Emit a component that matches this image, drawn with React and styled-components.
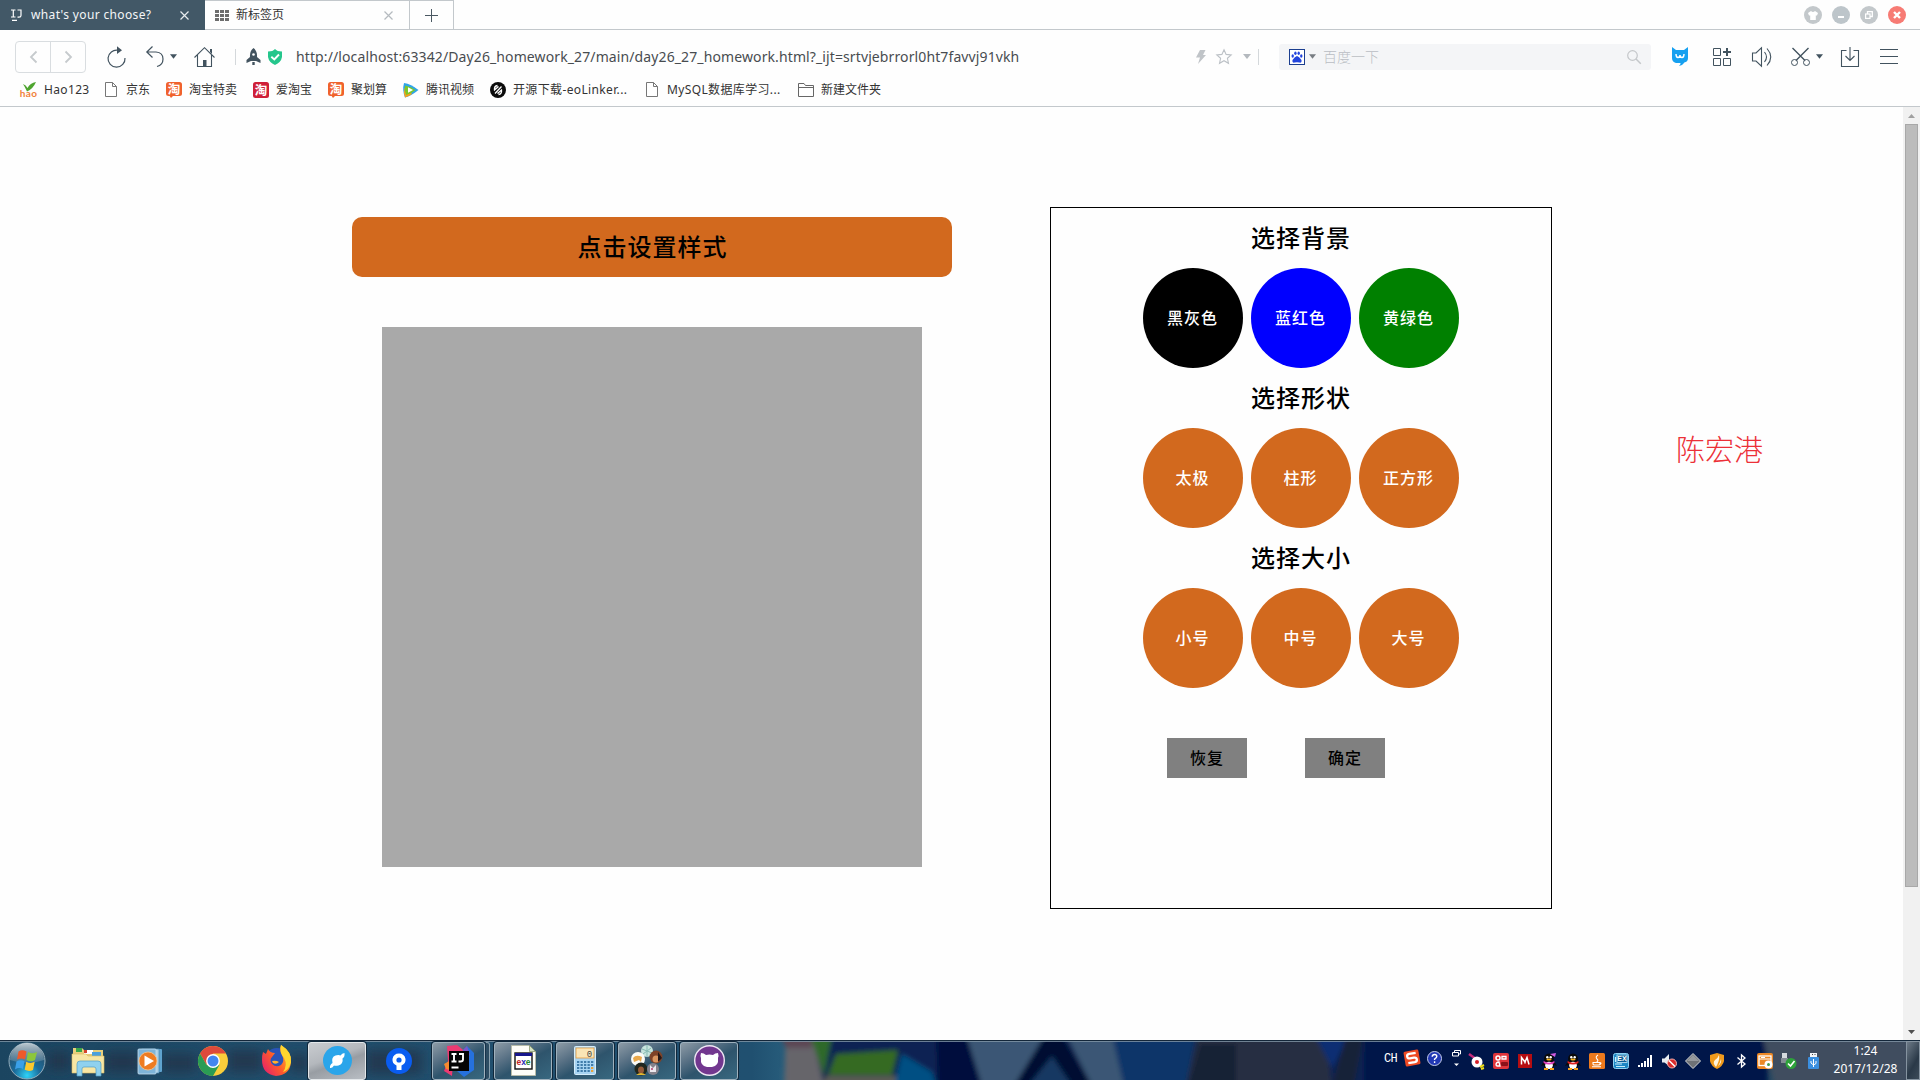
import React from "react";
import styled, { createGlobalStyle } from "styled-components";

const UI = '"Noto Sans", "Noto Sans CJK SC", sans-serif';
const CJK = '"Liberation Serif", "Noto Sans CJK SC", serif';

const GlobalStyle = createGlobalStyle`
  * { box-sizing: border-box; }
  html, body { margin: 0; background: #fff; overflow: hidden; }
  button { border: 0; padding: 0; background: none; font: inherit; color: inherit; }
  svg { display: block; flex: none; overflow: visible; }
`;

const Screen = styled.div`
  width: 1920px;
  height: 1080px;
  display: flex;
  flex-direction: column;
  font-family: ${UI};
  overflow: hidden;
  background: #fefefe;
`;

/* ---------- tab strip ---------- */
const TabStrip = styled.header`
  display: flex;
  flex: none;
  height: 30px;
  border-bottom: 1px solid #c3c8cc;
`;
const Tab = styled.div`
  display: flex;
  align-items: center;
  width: 205px;
  height: ${(p) => (p.$active ? 30 : 29)}px;
  padding: 0 16px 0 ${(p) => (p.$active ? 11 : 10)}px;
  background: ${(p) => (p.$active ? "#425867" : "#fefefe")};
  color: ${(p) => (p.$active ? "#f4f6f7" : "#333")};
  border-top: ${(p) => (p.$active ? "0" : "1px solid #c3c8cc")};
  border-right: ${(p) => (p.$active ? "0" : "1px solid #c3c8cc")};
`;
const TabTitle = styled.span`
  flex: 1;
  margin-left: ${(p) => p.$ml}px;
  font-size: 12px;
  line-height: 16px;
  letter-spacing: ${(p) => p.$ls || 0}px;
  white-space: nowrap;
`;
const NewTab = styled.button`
  display: flex;
  align-items: center;
  justify-content: center;
  width: 44px;
  border-top: 1px solid #c3c8cc;
  border-right: 1px solid #c3c8cc;
`;
const WindowButtons = styled.div`
  display: flex;
  gap: 10px;
  align-items: center;
  margin-left: auto;
  padding: 1px 14px 0 0;
`;
const RoundButton = styled.button`
  display: flex;
  align-items: center;
  justify-content: center;
  width: 18px;
  height: 18px;
  border-radius: 50%;
  background: ${(p) => p.$bg};
`;

/* ---------- address bar ---------- */
const Toolbar = styled.nav`
  display: flex;
  flex: none;
  align-items: center;
  height: 53px;
`;
const Slot = styled.div`
  display: flex;
  flex: none;
  align-items: center;
  margin-left: ${(p) => p.$ml || 0}px;
`;
const NavPair = styled.div`
  display: flex;
  margin-left: 15px;
  width: 71px;
  height: 32px;
  border: 1px solid #d9dde0;
  border-radius: 4px;
`;
const NavButton = styled.button`
  display: flex;
  flex: 1;
  align-items: center;
  justify-content: center;
  & + & { border-left: 1px solid #d9dde0; }
`;
const Divider = styled.i`
  flex: none;
  width: 1px;
  height: 16px;
  margin-left: ${(p) => p.$ml}px;
  background: #d4d8db;
`;
const Address = styled.div`
  flex: none;
  width: 900px;
  margin-left: 14px;
  font-size: 14px;
  font-weight: 400;
  line-height: 20px;
  letter-spacing: ${(p) => p.$ls}px;
  color: #484c50;
  white-space: nowrap;
`;
const SearchBox = styled.div`
  display: flex;
  flex: none;
  align-items: center;
  width: 372px;
  height: 26px;
  margin-left: 20px;
  padding: 0 10px;
  border-radius: 3px;
  background: #f4f5f7;
`;
const SearchHint = styled.span`
  flex: 1;
  margin-left: 7px;
  font-size: 14px;
  font-weight: 300;
  line-height: 18px;
  color: #b9bdc3;
`;

/* ---------- bookmarks ---------- */
const Bookmarks = styled.nav`
  display: flex;
  flex: none;
  align-items: center;
  box-sizing: content-box;
  height: 13px;
  padding: 0 0 10px 20px;
  border-bottom: 1px solid #c3c8cc;
`;
const Bookmark = styled.a`
  display: flex;
  flex: none;
  align-items: center;
  width: ${(p) => p.$w}px;
  gap: ${(p) => p.$gap || 7}px;
  font-size: 12px;
  line-height: 16px;
  letter-spacing: ${(p) => p.$ls || 0}px;
  color: #333;
  white-space: nowrap;
`;

/* ---------- page ---------- */
const Viewport = styled.div`
  display: flex;
  flex: none;
  height: 933px;
`;
const Page = styled.main`
  display: flex;
  flex: 1;
  align-items: flex-start;
  padding: 100px 0 0 352px;
  font-family: ${CJK};
`;
const Stage = styled.section`
  display: flex;
  flex-direction: column;
  align-items: center;
  gap: 50px;
  width: 600px;
  margin-top: 10px;
`;
const StyleButton = styled.button`
  width: 600px;
  height: 60px;
  padding: 0 0 3px 1px;
  border-radius: 10px;
  background: #d2691e;
  color: #000;
  font-size: 24px;
  font-weight: 500;
  letter-spacing: 1px;
`;
const Canvas = styled.div`
  width: 540px;
  height: 540px;
  background: #a9a9a9;
`;
const Panel = styled.aside`
  width: 502px;
  height: 702px;
  margin-left: 98px;
  border: 1px solid #000;
`;
const GroupTitle = styled.h2`
  margin: 0;
  height: 60px;
  font-size: 24px;
  font-weight: 500;
  line-height: 62px;
  letter-spacing: 1px;
  text-align: center;
`;
const Options = styled.div`
  display: flex;
  justify-content: center;
  gap: 8px;
`;
const Option = styled.button`
  width: 100px;
  height: 100px;
  padding: 0 1px 2px 0;
  border-radius: 50%;
  background: ${(p) => p.$bg || "#d2691e"};
  color: #fff;
  font-size: 16px;
  font-weight: 500;
  letter-spacing: 1px;
`;
const Actions = styled.div`
  display: flex;
  gap: 58px;
  margin: 50px 0 0 116px;
`;
const Action = styled.button`
  width: 80px;
  height: 40px;
  padding-bottom: 2px;
  background: #808080;
  font-size: 16px;
  font-weight: 500;
  letter-spacing: 1px;
  color: #000;
`;
const Author = styled.p`
  margin: 224px 0 0 124px;
  font-size: 29px;
  font-weight: 300;
  line-height: 40px;
  color: #ec3038;
`;
const ScrollTrack = styled.div`
  display: flex;
  flex-direction: column;
  align-items: center;
  width: 17px;
  background: #f1f1f1;
`;
const ScrollArrow = styled.div`
  display: flex;
  align-items: center;
  justify-content: center;
  height: 17px;
`;
const ScrollThumb = styled.div`
  width: 13px;
  height: 763px;
  margin-bottom: auto;
  border: 1px solid #a8a8a8;
  background: #bcbcbc;
`;

/* ---------- taskbar ---------- */
const Taskbar = styled.footer`
  position: relative;
  display: flex;
  flex: none;
  height: 40px;
  background: #1f4964;
  overflow: hidden;
`;
const Wallpaper = styled.svg`
  position: absolute;
  inset: 0;
`;
const Launchers = styled.div`
  position: relative;
  display: flex;
  align-items: center;
  padding-top: 1px;
`;
const Launcher = styled.button`
  display: flex;
  align-items: center;
  justify-content: center;
  width: ${(p) => p.$w}px;
  height: 38px;
`;
const RunningApp = styled.button`
  display: flex;
  align-items: center;
  justify-content: center;
  width: ${(p) => p.$w || 58}px;
  height: 38px;
  margin-left: ${(p) => (p.$ml === undefined ? 4 : p.$ml)}px;
  border: 1px solid ${(p) => (p.$active ? "#e3e7ea" : "#9fb1bd")};
  border-radius: 3px;
  box-shadow: 0 0 0 1px #10273a;
  background: ${(p) =>
    p.$active
      ? "linear-gradient(160deg, #c9ccd0 0%, #b4b8bd 40%, #989da3 55%, #b9bec4 100%)"
      : "linear-gradient(150deg, #8d9ba6 0%, #577084 32%, #2e546c 55%, #386880 100%)"};
`;
const StackEdge = styled.i`
  width: 5px;
  height: 38px;
  border: 1px solid #8aa0ae;
  border-left-color: #16324a;
  border-radius: 0 3px 3px 0;
  background: #2d4d63;
`;
const Tray = styled.div`
  position: relative;
  display: flex;
  align-items: center;
  margin-left: auto;
`;
const Lang = styled.span`
  width: 19px;
  padding-bottom: 3px;
  font: 12px/14px "Liberation Mono", monospace;
  letter-spacing: -0.8px;
  color: #fff;
`;
const TrayIcon = styled.span`
  display: flex;
  align-items: center;
  justify-content: center;
  width: ${(p) => p.$w || 24}px;
  height: 40px;
  padding-bottom: ${(p) => (p.$up ? 4 : 0)}px;
  padding-top: ${(p) => (p.$up ? 0 : 2)}px;
`;
const Clock = styled.time`
  width: 81px;
  font-size: 12px;
  line-height: 18px;
  text-align: center;
  color: #fff;
`;
const ShowDesktop = styled.button`
  align-self: stretch;
  width: 14px;
  margin-top: 1px;
  border: 1px solid #8593a0;
  background: linear-gradient(120deg, #6d7a87, #2a3948 60%, #3c4b59);
`;

const INK = "#42535f";

const Caret = ({ color = INK, w = 7 }) => (
  <svg width={w} height="5" viewBox="0 0 8 5"><path d="M0 0H8L4 5Z" fill={color} /></svg>
);
const Cross = ({ color }) => (
  <svg width="9" height="9" viewBox="0 0 9 9"><path d="M.5 .5 8.5 8.5M8.5 .5 .5 8.5" stroke={color} strokeWidth="1.2" /></svg>
);
const DocIcon = () => (
  <svg width="12" height="15" viewBox="0 0 12 15"><path d="M.5 .5H7.5L11.5 4.5V14.5H.5ZM7.5 .5V4.5H11.5" fill="#fff" stroke="#777" /></svg>
);
const TaoIcon = ({ bg, bubble }) => (
  <svg width="16" height="16" viewBox="0 0 16 16">
    <rect width="16" height={bubble ? 14 : 16} rx="2.5" fill={bg} />
    {bubble && <path d="M3 13H8L5 16Z" fill={bg} />}
    <text x="8" y={bubble ? 11.6 : 12.6} fontSize="12.5" fontWeight="700" fill="#fff" textAnchor="middle" fontFamily="Noto Sans CJK SC">淘</text>
  </svg>
);
const Penguin = ({ scarf, bow }) => (
  <svg width="16" height="17" viewBox="0 0 16 17">
    <ellipse cx="8" cy="6" rx="5" ry="5.6" fill="#0a0a0a" />
    <path d="M3 8 0 13 3 12ZM13 8 16 13 13 12Z" fill="#0a0a0a" />
    <ellipse cx="8" cy="11.5" rx="5.4" ry="4.6" fill="#0a0a0a" />
    <ellipse cx="8" cy="12.3" rx="3.8" ry="3.6" fill="#fff" />
    <circle cx="6.3" cy="4.2" r="1.2" fill="#fff" /><circle cx="9.7" cy="4.2" r="1.2" fill="#fff" />
    <ellipse cx="8" cy="6.6" rx="2.6" ry="1" fill="#f6b21b" />
    <path d="M2.6 8Q8 11.4 13.4 8V10Q8 13 2.6 10Z" fill={scarf} />
    {bow && <path d="M9 1 15 0 14 4Z" fill="#d05be0" />}
    <path d="M3 16H7M9 16H13" stroke="#f6a01b" strokeWidth="1.8" />
  </svg>
);

const TaskbarWallpaper = () => (
  <Wallpaper width="1920" height="40" viewBox="0 0 1920 40">
    <defs>
      <filter id="soft" x="-5%" y="-50%" width="110%" height="200%"><feGaussianBlur stdDeviation="2.4" /></filter>
      <filter id="softer" x="-10%" y="-80%" width="120%" height="260%"><feGaussianBlur stdDeviation="6" /></filter>
      <linearGradient id="teal" x1="0" x2="1" y1="0" y2="0">
        <stop offset="0" stopColor="#1b4560" /><stop offset=".35" stopColor="#214e6c" />
        <stop offset=".94" stopColor="#205070" /><stop offset="1" stopColor="#2a6280" />
      </linearGradient>
    </defs>
    <rect width="800" height="40" fill="url(#teal)" />
    <g filter="url(#softer)" fill="#233347" opacity=".75">
      <rect x="48" y="12" width="22" height="18" /><rect x="105" y="12" width="35" height="20" />
      <rect x="162" y="14" width="34" height="18" /><rect x="228" y="10" width="34" height="22" />
      <rect x="290" y="14" width="18" height="18" /><rect x="366" y="10" width="56" height="24" />
    </g>
    <g filter="url(#soft)">
      <rect x="788" y="-6" width="620" height="52" fill="#0a2452" />
      <path d="M786-6H812L824 46H784Z" fill="#66656b" /><path d="M780-6H812V8H786Z" fill="#5b4655" />
      <path d="M810-4H832L824 36Z" fill="#2f692b" />
      <path d="M836 14 898 10 892 35H828Z" fill="#356a20" /><path d="M826 36H896V46H822Z" fill="#5b5b55" />
      <path d="M902 14 932 32 936 46H894Z" fill="#055083" />
      <path d="M936-6H966L982 46H938Z" fill="#000d3c" />
      <path d="M966-6H1045L1014 46H982Z" fill="#3b5775" />
      <path d="M1045-4H1062L1092 46H1014Z" fill="#020f33" />
      <path d="M1052 16 1072 46H1028Z" fill="#153762" />
      <path d="M1066-6H1112L1124 46H1092Z" fill="#3b5775" />
      <path d="M1112-6H1196L1186 46H1124Z" fill="#0c3569" />
      <path d="M1198-6H1325L1332 46H1186Z" fill="#252e42" />
      <path d="M1200 4H1236V46H1188Z" fill="#192136" />
      <path d="M1314-6H1350L1332 28Z" fill="#102f73" />
      <path d="M1346-6H1364L1354 46H1332Z" fill="#182238" />
      <rect x="1364" y="-6" width="404" height="52" fill="#001949" />
      <path d="M1762-6H1930V46H1774Z" fill="#3f4e5e" />
    </g>
    <rect width="1920" height="1" fill="#14273a" />
    <rect y="1" width="1920" height="1" fill="#8296a6" opacity=".8" />
  </Wallpaper>
);

const groups = [
  { title: "选择背景", items: [["黑灰色", "#000"], ["蓝红色", "#00f"], ["黄绿色", "#008000"]] },
  { title: "选择形状", items: [["太极"], ["柱形"], ["正方形"]] },
  { title: "选择大小", items: [["小号"], ["中号"], ["大号"]] },
];

const bookmarks = [
  { label: "Hao123", w: 85, gap: 7, ls: 0.35, icon: (
    <svg width="17" height="16" viewBox="0 0 17 16">
      <path d="M3 2Q6 3 7.500 6Q10 1 16 0Q13 7 7 9.500Q5 5 3 2Z" fill="#4ea52f" />
      <text x="8.5" y="14.500" fontSize="10" fontWeight="700" textAnchor="middle" fill="#f0813a" fontFamily="Lato">hao</text>
    </svg>) },
  { label: "京东", w: 61, gap: 9, icon: <DocIcon /> },
  { label: "淘宝特卖", w: 87, icon: <TaoIcon bg="#f0622d" bubble /> },
  { label: "爱淘宝", w: 75, icon: <TaoIcon bg="#cf2038" /> },
  { label: "聚划算", w: 75, icon: <TaoIcon bg="#f0622d" bubble /> },
  { label: "腾讯视频", w: 87, icon: (
    <svg width="16" height="16" viewBox="0 0 16 16">
      <path d="M1 1Q8 2 15.5 8Q8 14 2 15.5Q-1 8 1 1Z" fill="#2ea3e8" />
      <path d="M1.5 6Q6 8 9 12Q5 15 2 15.5Q.2 11 1.5 6Z" fill="#f8a01f" />
      <path d="M2 3.5Q8 4.500 12.500 8Q8 12 3 13Q1 8 2 3.500Z" fill="#7bc829" />
      <path d="M5 5.300 10 8 5 10.700Z" fill="#fff" />
    </svg>) },
  { label: "开源下载-eoLinker...", w: 156, ls: 0.36, icon: (
    <svg width="16" height="16" viewBox="0 0 16 16">
      <circle cx="8" cy="8" r="8" fill="#0b0b0b" />
      <path d="M7.500 3.500Q4 4 4.500 8L8.500 4.500M8.500 12.500Q12 12 11.500 8L7.500 11.500M5 11.500 11.500 4.500" stroke="#fff" strokeWidth="1.300" fill="none" />
    </svg>) },
  { label: "MySQL数据库学习...", w: 152, gap: 9, ls: 0.36, icon: <DocIcon /> },
  { label: "新建文件夹", w: 100, gap: 7, icon: (
    <svg width="16" height="14" viewBox="0 0 16 14"><path d="M.5 13.500V.5H6L7.500 2.500H15.500V13.500ZM.5 4.500H15.500" fill="none" stroke="#666" /></svg>) },
];

const trayIcons = [
  <svg width="16" height="16" viewBox="0 0 16 16"><path d="M0 1 7 6" stroke="#c42b7b" strokeWidth="2.500" /><circle cx="8" cy="9" r="5.500" fill="#fff" /><circle cx="8" cy="9" r="2" fill="#d61f28" /><path d="M11 14 15 12M12 16 15 15" stroke="#f2e018" strokeWidth="2" /></svg>,
  <svg width="16" height="16" viewBox="0 0 16 16"><rect width="16" height="16" rx="2" fill="#e0343a" /><circle cx="5" cy="5" r="2" fill="none" stroke="#fff" strokeWidth="1.500" /><path d="M9 3.500H13V6H9ZM3 12Q3 9 6 9L7 13H4Z" fill="none" stroke="#fff" strokeWidth="1.300" /><rect x="8" y="9" width="7" height="4" rx="1" fill="#8d1119" /></svg>,
  <svg width="14" height="14" viewBox="0 0 14 14"><rect width="14" height="14" fill="#b50d12" /><path d="M3.500 10.500V3.500L7 8 9 3.500 11 10.500M7 9.500V8" stroke="#fff" strokeWidth="1.500" fill="none" /></svg>,
  <Penguin scarf="#e23fc0" bow />,
  <Penguin scarf="#e02222" />,
  <svg width="16" height="16" viewBox="0 0 16 16"><rect width="16" height="16" rx="1.500" fill="#ed7a1d" /><path d="M9 2Q6 4 8 6T7.500 9M4 9.500H11V11Q11 12 9.500 12H5.500Q4 12 4 11ZM11 9.800Q13 10 11 11.500M3 13.800H12" fill="none" stroke="#fff" strokeWidth="1.100" /></svg>,
  <svg width="16" height="16" viewBox="0 0 16 16"><rect x=".5" y=".5" width="15" height="15" rx="2" fill="#1c86c4" stroke="#8ed2f3" /><rect x="4" y="2" width="10" height="7.500" fill="#0d5c93" stroke="#c8ecfb" strokeWidth=".8" /><text x="9" y="8.300" fontSize="7" fontWeight="700" fill="#fff" textAnchor="middle" fontFamily="Liberation Sans">EX</text><path d="M2 11H9M3 13.500H12M2.500 4V9" stroke="#c8ecfb" strokeWidth="1.200" /></svg>,
  <svg width="14" height="12" viewBox="0 0 14 12"><path d="M0 10H2V12H0ZM3 8H5V12H3ZM6 6H8V12H6ZM9 3H11V12H9ZM12 0H14V12H12Z" fill="#fff" /></svg>,
  <svg width="15" height="15" viewBox="0 0 15 15"><path d="M0 4.500H2.500L7 0V12L2.500 8.500H0Z" fill="#e8ecf0" /><circle cx="10" cy="9.500" r="4.500" fill="#d92b2b" stroke="#f6b0ac" /><path d="M7 6.500 13 12.500" stroke="#fff" strokeWidth="1.500" /></svg>,
  <svg width="16" height="16" viewBox="0 0 16 16"><path d="M8 .5 15.500 8 8 15.500 .5 8Z" fill="#6f7276" stroke="#d4d6d8" /><path d="M8 2 14 8H2Z" fill="#96999d" /></svg>,
  <svg width="14" height="16" viewBox="0 0 14 16"><path d="M0 2 7 0 14 2V8Q13 13 7 16Q1 13 0 8Z" fill="#f09a1c" /><path d="M9 2Q10 7 6 14Q2 10 5 7Q8 5 9 2ZM11 6Q12 10 8 13Q10 10 11 6Z" fill="#fff4dc" /></svg>,
  <svg width="9" height="14" viewBox="0 0 9 14"><path d="M.5 3.500 8 10 4.500 13V1L8 4 .5 10.500" fill="none" stroke="#fff" strokeWidth="1.300" /></svg>,
  <svg width="16" height="16" viewBox="0 0 16 16"><rect width="16" height="16" rx="2" fill="#ec8826" /><rect x="2" y="3" width="12" height="9.500" fill="none" stroke="#fff" strokeWidth="1.300" /><path d="M2 6H14M4 4.500H8" stroke="#fff" /><circle cx="11.500" cy="11.500" r="4" fill="#fff" /><circle cx="11.500" cy="11.500" r="1.500" fill="#4b9b50" /></svg>,
  <svg width="16" height="16" viewBox="0 0 16 16"><rect x="1" y="0" width="5" height="7" fill="#d5dade" /><rect x="0" y="5" width="7" height="5" fill="#858d95" /><circle cx="10" cy="10.500" r="5.500" fill="#2da23a" /><path d="M7 10.500 9.500 13 13.500 8" stroke="#fff" strokeWidth="1.600" fill="none" /></svg>,
  <svg width="11" height="16" viewBox="0 0 11 16"><rect x="2" y="0" width="7" height="4" fill="#f1f4f7" /><path d="M4 1.500H5M6.500 1.500H7.500" stroke="#444" /><rect x="0" y="4" width="11" height="12" rx="1" fill="#3a8fe0" /><path d="M5.500 6V14M3 8V10L5.500 12 8 10.500V8" stroke="#fff" fill="none" /></svg>,
];

export default function App() {
  return (
    <Screen>
      <GlobalStyle />
      <TabStrip>
        <Tab $active>
          <svg width="11" height="13" viewBox="0 0 11 13"><path d="M0 1H4.500M2.300 1V8M0 8H4.500M6.500 1H10V6.500Q10 8.200 8 8.200H6.500M1 11.300H6" fill="none" stroke="#fff" strokeWidth="1.200" /></svg>
          <TabTitle $ml={9} $ls={0.35}>what's your choose?</TabTitle>
          <Cross color="#e7ebee" />
        </Tab>
        <Tab>
          <svg width="14" height="11" viewBox="0 0 14 11"><path d="M0 0H4V3H0ZM5 0H9V3H5ZM10 0H14V3H10ZM0 4H4V7H0ZM5 4H9V7H5ZM10 4H14V7H10ZM0 8H4V11H0ZM5 8H9V11H5ZM10 8H14V11H10Z" fill="#6d6d6d" /></svg>
          <TabTitle $ml={7}>新标签页</TabTitle>
          <Cross color="#b5babf" />
        </Tab>
        <NewTab><svg width="13" height="13" viewBox="0 0 13 13"><path d="M6.500 0V13M0 6.500H13" stroke="#4a5862" /></svg></NewTab>
        <WindowButtons>
          <RoundButton $bg="#c3c8cb"><svg width="10" height="9" viewBox="0 0 10 9"><path d="M0 2 3 0Q5 2 7 0L10 2 9 4.500H7.800V9H2.200V4.500H1Z" fill="#fff" /></svg></RoundButton>
          <RoundButton $bg="#bdc5ca"><svg width="6" height="8" viewBox="0 0 6 8"><rect y="5" width="6" height="2" fill="#fff" /></svg></RoundButton>
          <RoundButton $bg="#c3c8cb"><svg width="8" height="8" viewBox="0 0 8 8"><path d="M2.500 3V.7H7.300V5.500H5" fill="none" stroke="#fff" strokeWidth="1.300" /><rect x=".6" y="3" width="4.400" height="4.400" fill="#c3c8cb" stroke="#fff" strokeWidth="1.200" /></svg></RoundButton>
          <RoundButton $bg="#f77b74"><svg width="8" height="8" viewBox="0 0 8 8"><path d="M1 1 7 7M7 1 1 7" stroke="#fff" strokeWidth="2.400" /></svg></RoundButton>
        </WindowButtons>
      </TabStrip>

      <Toolbar>
        <NavPair>
          <NavButton><svg width="7" height="12" viewBox="0 0 7 12"><path d="M6.500 .5 1 6 6.500 11.500" fill="none" stroke="#c6cacd" strokeWidth="1.800" /></svg></NavButton>
          <NavButton><svg width="7" height="12" viewBox="0 0 7 12"><path d="M.5 .5 6 6 .5 11.500" fill="none" stroke="#c6cacd" strokeWidth="1.800" /></svg></NavButton>
        </NavPair>
        <Slot $ml={21}><svg width="20" height="22" viewBox="0 0 20 22"><path d="M11 4.300A8.500 8.500 0 1 0 18 12" fill="none" stroke={INK} strokeWidth="1.200" /><path d="M10 .3 15 4.200 10 8Z" fill={INK} /></svg></Slot>
        <Slot $ml={19}><svg width="18" height="21" viewBox="0 0 18 21"><path d="M6.500 .5 .8 6 6.500 11.500M1 6H10Q17 6.500 17 13Q17 19 11 20.500" fill="none" stroke={INK} strokeWidth="1.200" /></svg></Slot>
        <Slot $ml={6}><Caret /></Slot>
        <Slot $ml={17}><svg width="21" height="20" viewBox="0 0 21 20"><path d="M.5 10.500 10.500 .7 20.500 10.500M3.500 8V19.500H17.500V8" fill="none" stroke={INK} strokeWidth="1.100" /><path d="M9 13H12.500V19.500H9ZM16 2H18V7L16 5Z" fill={INK} /></svg></Slot>
        <Divider $ml={20} />
        <Slot $ml={10}><svg width="15" height="17" viewBox="0 0 15 17"><path d="M7.500 0Q11.500 3 11 9L14.500 12V15L10 13H5L.5 15V12L4 9Q3.500 3 7.500 0Z" fill={INK} /><path d="M6.300 14H8.700V17H6.300Z" fill={INK} /><circle cx="7.500" cy="6.500" r="1.300" fill="#fff" /></svg></Slot>
        <Slot $ml={7}><svg width="14" height="16" viewBox="0 0 14 16"><path d="M0 2.500Q5 2.500 7 0Q9 2.500 14 2.500V8Q13 13.500 7 16Q1 13.500 0 8Z" fill="#25c68c" /><path d="M3.300 7.800 6.300 10.500 11 5.500" fill="none" stroke="#fff" strokeWidth="1.900" /></svg></Slot>
        <Address $ls={0.11}>http://localhost:63342/Day26_homework_27/main/day26_27_homework.html?_ijt=srtvjebrrorl0ht7favvj91vkh</Address>
        <Slot><svg width="10" height="14" viewBox="0 0 10 14"><path d="M4 0H9.500L7 5H10L2 14 4 7.500H0Z" fill="#c0c4c8" /></svg></Slot>
        <Slot $ml={10}><svg width="16" height="15" viewBox="0 0 16 15"><path d="M8 .8 10.100 5.400 15.200 5.900 11.400 9.300 12.500 14.300 8 11.700 3.500 14.300 4.600 9.300 .8 5.900 5.900 5.400Z" fill="none" stroke="#bcc1c6" strokeWidth="1.100" /></svg></Slot>
        <Slot $ml={11}><Caret color="#b4b9be" w={8} /></Slot>
        <Divider $ml={7} />
        <SearchBox>
          <svg width="16" height="16" viewBox="0 0 16 16"><rect x=".5" y=".5" width="15" height="15" fill="#fff" stroke="#1b3e8f" /><path d="M8 7Q10 7.500 12.500 11Q13 14 10.500 13.600Q8 13 5.500 13.600Q3 14 3.500 11Q6 7.500 8 7Z" fill="#2244dd" /><ellipse cx="3.700" cy="7" rx="1.200" ry="1.700" fill="#2244dd" /><ellipse cx="6.400" cy="4.200" rx="1.200" ry="1.800" fill="#2244dd" /><ellipse cx="9.700" cy="4.200" rx="1.200" ry="1.800" fill="#2244dd" /><ellipse cx="12.300" cy="7" rx="1.200" ry="1.700" fill="#2244dd" /></svg>
          <Slot $ml={4}><Caret color="#777c82" w={7} /></Slot>
          <SearchHint>百度一下</SearchHint>
          <svg width="14" height="14" viewBox="0 0 14 14"><circle cx="5.500" cy="5.500" r="4.800" fill="none" stroke="#c4c7ca" strokeWidth="1.200" /><path d="M9 9 13.800 13.800" stroke="#c4c7ca" strokeWidth="1.500" /></svg>
        </SearchBox>
        <Slot $ml={21}><svg width="16" height="19" viewBox="0 0 16 19"><path d="M0 0 4 3H12L16 0V11Q16 15 12 15.500H12.500Q11 18 7 19Q9 17 8.500 16H4Q0 15 0 11Z" fill="#16a0f0" /><path d="M4 7Q4 10.500 6 10.500T8 8Q8 10.500 10 10.500T12 7" fill="none" stroke="#fff" strokeWidth="1.400" /></svg></Slot>
        <Slot $ml={25}><svg width="18" height="18" viewBox="0 0 18 18"><path d="M.5 .5H7.500V7.500H.5ZM.5 10.500H7.500V17.500H.5ZM10.500 10.500H17.500V17.500H10.500Z" fill="none" stroke={INK} /><path d="M14 0V8M10 4H18" stroke={INK} strokeWidth="2" /></svg></Slot>
        <Slot $ml={21}><svg width="20" height="20" viewBox="0 0 20 20"><path d="M.5 6H4L9.500 .8V19.200L4 14H.5ZM12.500 5Q16.500 10 12.500 15M15 1.500Q22.500 10 15 18.500" fill="none" stroke={INK} strokeWidth="1.100" /></svg></Slot>
        <Slot $ml={19}><svg width="19" height="18" viewBox="0 0 19 18"><path d="M1.500 0 14 12.500M17.500 0 5 12.500" stroke={INK} strokeWidth="1.400" /><circle cx="3.500" cy="14.500" r="3" fill="none" stroke={INK} /><circle cx="15.500" cy="14.500" r="3" fill="none" stroke={INK} /></svg></Slot>
        <Slot $ml={6}><Caret /></Slot>
        <Slot $ml={18}><svg width="18" height="20" viewBox="0 0 18 20"><path d="M5.500 3.500H.5V19.500H17.500V3.500H12.500M9 0V13.500M4.500 9 9 13.500 13.500 9" fill="none" stroke={INK} strokeWidth="1.100" /></svg></Slot>
        <Slot $ml={21}><svg width="18" height="15" viewBox="0 0 18 15"><path d="M0 .5H18M0 7.500H18M0 14.500H18" stroke={INK} /></svg></Slot>
      </Toolbar>

      <Bookmarks>
        {bookmarks.map((b) => (
          <Bookmark key={b.label} $w={b.w} $gap={b.gap} $ls={b.ls}>{b.icon}<span>{b.label}</span></Bookmark>
        ))}
      </Bookmarks>

      <Viewport>
        <Page>
          <Stage>
            <StyleButton>点击设置样式</StyleButton>
            <Canvas />
          </Stage>
          <Panel>
            {groups.map((g) => (
              <section key={g.title}>
                <GroupTitle>{g.title}</GroupTitle>
                <Options>
                  {g.items.map(([label, bg]) => <Option key={label} $bg={bg}>{label}</Option>)}
                </Options>
              </section>
            ))}
            <Actions>
              <Action>恢复</Action>
              <Action>确定</Action>
            </Actions>
          </Panel>
          <Author>陈宏港</Author>
        </Page>
        <ScrollTrack>
          <ScrollArrow><svg width="7" height="4" viewBox="0 0 7 4"><path d="M0 4 3.500 0 7 4Z" fill="#a0a0a0" /></svg></ScrollArrow>
          <ScrollThumb />
          <ScrollArrow><svg width="7" height="4" viewBox="0 0 7 4"><path d="M0 0H7L3.500 4Z" fill="#505050" /></svg></ScrollArrow>
        </ScrollTrack>
      </Viewport>

      <Taskbar>
        <TaskbarWallpaper />
        <Launchers>
          <Launcher $w={54}>
            <svg width="38" height="38" viewBox="0 0 38 38">
              <defs>
                <radialGradient id="orb" cx=".5" cy=".9" r=".8"><stop offset="0" stopColor="#2fd3f7" /><stop offset=".45" stopColor="#1a6c9c" /><stop offset="1" stopColor="#2b4c63" /></radialGradient>
                <linearGradient id="gloss" x1="0" x2="0" y1="0" y2="1"><stop offset="0" stopColor="#d6e0e6" stopOpacity=".85" /><stop offset="1" stopColor="#9fb5c2" stopOpacity=".25" /></linearGradient>
              </defs>
              <circle cx="19" cy="19" r="18" fill="url(#orb)" stroke="#94adbb" />
              <path d="M2 18A17 17 0 0 1 36 18Q19 24 2 18Z" fill="url(#gloss)" />
              <path d="M10.500 9.500Q14 7 18.500 9.500L17 17.500Q13 15.500 9 17.500Z" fill="#ee5a2a" />
              <path d="M20 10Q24 12.500 29 10L27 18Q23 20.500 18.500 18Z" fill="#8cc63c" />
              <path d="M8.500 19.500Q12.500 17.200 16.500 19.200L15 27Q11 25 7 27.500Z" fill="#3aa0e8" />
              <path d="M18.200 19.700Q22.500 22 26.700 19.800L25 28Q21 30 16.700 27.800Z" fill="#fcc92d" />
            </svg>
          </Launcher>
          <Launcher $w={68}>
            <svg width="33" height="30" viewBox="0 0 33 30">
              <path d="M1 2H10L12 4H31V27H1Z" fill="#e9cf7c" /><rect x="4" y="2" width="6" height="4" fill="#3aa64a" /><rect x="12" y="4" width="9" height="4" fill="#fff" /><rect x="20" y="6" width="9" height="4" fill="#4ba0dd" /><rect x="12" y="4" width="3" height="3" fill="#d6452e" />
              <path d="M0 8H14L16 10H32V27H0Z" fill="#f7e6a4" stroke="#d9bb63" strokeWidth=".6" />
              <path d="M5 30V18Q5 15 8 15H26Q29 15 29 18V30H24V23Q24 21 22 21H12Q10 21 10 23V30Z" fill="#8fd1ee" stroke="#4e9cc4" strokeWidth=".7" />
            </svg>
          </Launcher>
          <Launcher $w={56}>
            <svg width="26" height="26" viewBox="0 0 26 26">
              <rect x="8" y="1" width="17" height="23" rx="1" fill="#5fa3cf" /><rect x="5" y="1" width="17" height="24" fill="#a9cfe6" stroke="#4583ad" strokeWidth=".7" /><rect x="1" y="1" width="18" height="25" rx="1" fill="#7fb4d8" stroke="#c6e0f0" strokeWidth=".8" />
              <circle cx="11" cy="13" r="9" fill="#ee7c22" stroke="#f9c48c" strokeWidth=".8" /><path d="M7.500 7.500 17 13 7.500 18.500Z" fill="#fff" />
            </svg>
          </Launcher>
          <Launcher $w={70}>
            <svg width="30" height="30" viewBox="0 0 30 30">
              <circle cx="15" cy="15" r="15" fill="#f9ce3b" />
              <path d="M2 7.500A15 15 0 0 1 28 7.500H15L8.500 18.750Z" fill="#de4a3b" />
              <path d="M2 7.500A15 15 0 0 0 15 30L21.500 18.750 8.500 18.750Z" fill="#2a9c54" />
              <circle cx="15" cy="15" r="6.900" fill="#fff" /><circle cx="15" cy="15" r="5.500" fill="#4285f0" />
            </svg>
          </Launcher>
          <Launcher $w={56}>
            <svg width="31" height="31" viewBox="0 0 31 31">
              <defs><linearGradient id="fox" x1="0" x2="1" y1=".8" y2=".1"><stop offset="0" stopColor="#e5226b" /><stop offset=".45" stopColor="#ff5b2a" /><stop offset="1" stopColor="#ffd52e" /></linearGradient></defs>
              <circle cx="16" cy="16" r="13" fill="#2a54b8" />
              <path d="M2 7 5 9 7 4Q9 8 14 8L11 12Q8 15 11 19Q15 23 20 20Q24 16 21 10Q18 5 20 0Q31 7 30 17Q29 30 15 31Q1 29 1 15Q1 10 2 7Z" fill="url(#fox)" />
              <path d="M20 0Q31 7 30 17Q28 25 22 27Q27 20 23 13Q18 7 20 0Z" fill="#ffd52e" />
              <path d="M11 16Q15 15 18 17Q15 20 12 18Z" fill="#ffae2b" />
            </svg>
          </Launcher>
          <RunningApp $active>
            <svg width="29" height="29" viewBox="0 0 29 29"><circle cx="14.500" cy="14.500" r="14.500" fill="#2aa5ea" /><path d="M21.500 7Q22 11 19.500 12.500Q20.500 18 15.500 19.500Q12 20 11 19.500Q9 22.500 7 22Q6.500 19 9.500 17Q8 11 12.500 9.500Q15.500 8.500 17.500 9.500Q19 7 21.500 7Z" fill="#fff" /></svg>
          </RunningApp>
          <Launcher $w={66}>
            <svg width="26" height="26" viewBox="0 0 26 26"><circle cx="13" cy="13" r="13" fill="#0a5cf0" /><path d="M10.500 22V17.500Q6 15.500 6.500 11Q7.500 5.500 13 5.500T19.500 11Q20 15.500 15.500 17.500V22Z" fill="#fff" /><circle cx="13" cy="12" r="2.600" fill="#0a5cf0" /></svg>
          </Launcher>
          <RunningApp $w={53} $ml={0}>
            <svg width="32" height="32" viewBox="0 0 32 32">
              <path d="M4 1 14 0 24 8 10 18 9 31 1 26 5 16Z" fill="#ec3a72" /><path d="M1 19 10 14V26L3 24Z" fill="#f88a2f" /><path d="M20 5 24 1 31 8V25L21 32 14 26Z" fill="#2671dd" /><path d="M20 5 24 1 27 10 24 12Z" fill="#7e57c8" />
              <rect x="6" y="6" width="20" height="20" fill="#050505" /><path d="M8.500 9H13.500M11 9V16.500M8.500 16.500H13.500M16 9H20V14.500Q20 16.500 17.500 16.500H15.500M8.500 22.500H15.500" stroke="#fff" strokeWidth="1.900" fill="none" />
            </svg>
          </RunningApp>
          <StackEdge />
          <RunningApp>
            <svg width="25" height="31" viewBox="0 0 25 31">
              <path d="M.5 .5H18.500L24.500 6.500V30.500H.5Z" fill="#fdfdf8" stroke="#b6bba8" /><path d="M18.500 .5V6.500H24.500Z" fill="#d7e4c3" stroke="#7a8b60" strokeWidth=".7" />
              <rect x="4" y="8" width="17" height="16" fill="#fff" stroke="#111" strokeWidth="1.400" /><rect x="4" y="8" width="17" height="3" fill="#16168c" />
              <text x="12.500" y="19.500" fontSize="8.500" fontWeight="700" textAnchor="middle" fontFamily="Liberation Sans"><tspan fill="#c32626">e</tspan><tspan fill="#2626b4">x</tspan><tspan fill="#1f8a35">e</tspan></text>
            </svg>
          </RunningApp>
          <RunningApp>
            <svg width="22" height="29" viewBox="0 0 22 29">
              <rect x=".5" y=".5" width="21" height="28" rx="1" fill="#a8d4f2" stroke="#d4ecfa" /><rect x="2" y="2" width="18" height="10" fill="#fae5b6" stroke="#e39a3c" strokeWidth=".8" /><text x="15.500" y="10.500" fontSize="9" textAnchor="middle" fill="#444" fontFamily="Liberation Mono">0</text>
              {[15, 18, 21, 24].map((y) => [3, 6.5, 10, 13.5, 17].map((x) => <rect key={`${x}-${y}`} x={x} y={y} width="2.300" height="2" fill={x === 17 && y > 20 ? "#e8a33c" : "#417dab"} />))}
            </svg>
          </RunningApp>
          <RunningApp>
            <svg width="32" height="31" viewBox="0 0 32 31">
              <circle cx="16" cy="6" r="6" fill="#c7e4dd" /><path d="M11 4 21 8M12 9 20 3M16 0V12" stroke="#85b9b2" />
              <circle cx="7" cy="14" r="7" fill="#fbfbf7" /><path d="M2 13Q5 9 11 12L10 17 8 15 3 17Z" fill="#e9a94d" />
              <circle cx="25" cy="12" r="6.500" fill="#7e4227" /><circle cx="25" cy="14" r="3.500" fill="#d99560" /><path d="M27 7 31 13 27 17" fill="#241818" />
              <circle cx="10" cy="24" r="6.500" fill="#20271e" /><ellipse cx="10" cy="25" rx="3" ry="3.500" fill="#965a37" /><path d="M5 30Q10 26 15 30Z" fill="#e5b92f" />
              <circle cx="22" cy="24" r="6" fill="#85828c" /><path d="M19 20 22 23 25 20V27H19Z" fill="#ece8ee" /><circle cx="21" cy="24" r="1" fill="#b43c6e" />
            </svg>
          </RunningApp>
          <RunningApp>
            <svg width="31" height="31" viewBox="0 0 31 31"><circle cx="15.500" cy="15.500" r="14.800" fill="#72378f" stroke="#efe6f4" strokeWidth="1.400" /><path d="M7 8Q10 8 12 10Q15.500 9 19 10Q21 8 24 8Q25 11 24 13Q25 21 18 22H13Q6 21 7 13Q6 11 7 8Z" fill="#fff" /></svg>
          </RunningApp>
        </Launchers>

        <Tray>
          <Lang>CH</Lang>
          <TrayIcon $up $w={18}><svg width="16" height="16" viewBox="0 0 16 16"><g transform="rotate(-10 8 8)"><rect x=".5" y=".5" width="15" height="15" rx="1.500" fill="#ee4a23" /><path d="M12.500 3.500H6Q3.500 3.500 3.500 5.800T6 8H10Q12.500 8 12.500 10.200T10 12.500H3.500" fill="none" stroke="#fff" strokeWidth="2.300" /></g></svg></TrayIcon>
          <TrayIcon $up $w={26}><svg width="15" height="15" viewBox="0 0 15 15"><circle cx="7.500" cy="7.500" r="7" fill="#2138b5" stroke="#c6cde9" /><path d="M5.200 5.700Q5.400 3.500 7.600 3.500T9.800 5.600Q9.800 6.800 7.600 8V9M7.600 10.300V12" fill="none" stroke="#fff" strokeWidth="1.400" /></svg></TrayIcon>
          <TrayIcon $up $w={18}><svg width="9" height="17" viewBox="0 0 9 17"><path d="M2.500 2V.5H8.500V4H6.500M.5 2.500H6.500V6H.5Z" fill="none" stroke="#fff" /><path d="M2 13.500H7L4.500 16Z" fill="#fff" /></svg></TrayIcon>
          {trayIcons.map((icon, i) => <TrayIcon key={i}>{icon}</TrayIcon>)}
          <Clock>1:24<br />2017/12/28</Clock>
          <ShowDesktop />
        </Tray>
      </Taskbar>
    </Screen>
  );
}
